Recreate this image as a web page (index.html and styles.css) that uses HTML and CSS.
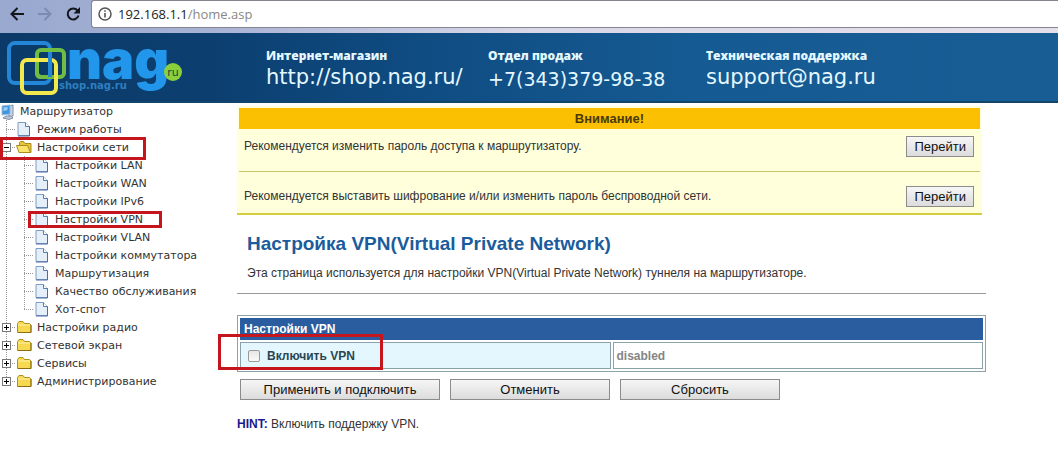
FILE: index.html
```html
<!DOCTYPE html>
<html lang="ru">
<head>
  <meta charset="UTF-8">
  <meta name="viewport" content="width=device-width, initial-scale=1">
  <title>Настройка VPN</title>
  <link rel="stylesheet" href="styles.css">
</head>
<body>
  <!-- Shared icons -->
  <svg class="sprite" aria-hidden="true">
    <symbol id="icon-page" viewBox="0 0 16 16">
      <path d="M2 1.500h7.500l4 4v9H2z" fill="#e4effa" stroke="#7f9cc4"/>
      <path d="M9.500 1.500v4h4" fill="#fff" stroke="#5a7db0"/>
      <path d="M13.500 5.500v9.500H2" fill="none" stroke="#4c6da3"/>
    </symbol>
    <symbol id="icon-folder" viewBox="0 0 16 16">
      <path d="M1.500 13.500v-9l1.500-2h4l1.500 2h5l1.500 1.500v7.500z" fill="#f7d851" stroke="#b08f1c"/>
      <path d="M2 6h12" stroke="#fff3a8"/>
      <path d="M2 13.500h13V6" fill="none" stroke="#8a6d10"/>
    </symbol>
    <symbol id="icon-folder-open" viewBox="0 0 16 16">
      <path d="M3.500 13V3.500l1-1h3l1.500 2h6V13.500z" fill="#e9c33c" stroke="#a98a1d"/>
      <path d="M.5 6.500h11l3 7H3z" fill="#fbe46c" stroke="#a98a1d"/>
    </symbol>
    <symbol id="icon-computer" viewBox="0 0 16 16">
      <path d="M9 2l4-1v11l-4 1z" fill="#c5d3e4" stroke="#7c92b0"/>
      <path d="M2 2l8-1v9l-8 1z" fill="#3f94e0" stroke="#9fb9d8"/>
      <path d="M3.500 3.500l4-.5v3l-4 1z" fill="#9ad0fa"/>
      <path d="M3 14l3-2h5l2 2-4 1.500z" fill="#b9c4d4" stroke="#8392a8"/>
    </symbol>
  </svg>

  <div class="browser">
    <div class="browser-nav">
      <button type="button" aria-label="Назад">
        <svg width="16" height="16" viewBox="0 0 16 16" fill="none" stroke="#15161c" stroke-width="2"><path d="M15 8H3M8.500 2L2.500 8l6 6"/></svg>
      </button>
      <button type="button" aria-label="Вперёд" disabled>
        <svg width="16" height="16" viewBox="0 0 16 16" fill="none" stroke="#7c8cb0" stroke-width="2"><path d="M1 8h12M7.500 2l6 6-6 6"/></svg>
      </button>
      <button type="button" aria-label="Обновить">
        <svg width="16" height="16" viewBox="0 0 16 16"><path d="M12.500 4.500A5.500 5.500 0 1 0 13.500 9.500" fill="none" stroke="#15161c" stroke-width="2"/><path d="M15 1v6.500H8.500z" fill="#15161c"/></svg>
      </button>
    </div>
    <div class="address">
      <svg width="14" height="14" viewBox="0 0 14 14"><circle cx="7" cy="7" r="6" fill="none" stroke="#555" stroke-width="1.500"/><path d="M7 6v4.500M7 3.200v1.600" stroke="#555" stroke-width="1.600"/></svg>
      <span>192.168.1.1<span class="path">/home.asp</span></span>
    </div>
  </div>

  <header class="header">
    <a class="logo" href="#" aria-label="shop.nag.ru">
      <svg width="186" height="70" viewBox="0 0 186 70">
        <g fill="none" stroke-width="4">
          <rect x="9" y="10" width="41" height="40" rx="6" stroke="#2386d6"/>
          <rect x="37" y="17" width="27" height="27" rx="4" stroke="#6fbe43"/>
          <rect x="22" y="27" width="34" height="33" rx="5" stroke="#f3e84c"/>
          <path d="M37 34v6q0 4 4 4h9" stroke="#6fbe43"/>
          <path d="M50 20v24" stroke="#2386d6"/>
        </g>
        <text class="logo-name" x="67" y="46">nag</text>
        <text class="logo-shop" x="59" y="56">shop.nag.ru</text>
        <circle cx="173" cy="39" r="9" fill="#8bd03c"/>
        <text class="logo-ru" x="173" y="43" text-anchor="middle">ru</text>
      </svg>
    </a>
    <div class="contact contact-shop">
      <strong>Интернет-магазин</strong>
      <a href="#">http://shop.nag.ru/</a>
    </div>
    <div class="contact contact-phone">
      <strong>Отдел продаж</strong>
      <a href="#">+7(343)379-98-38</a>
    </div>
    <div class="contact">
      <strong>Техническая поддержка</strong>
      <a href="#">support@nag.ru</a>
    </div>
  </header>

  <div class="layout">
    <nav class="sidebar">
      <div class="row root">
        <svg class="icon"><use href="#icon-computer"/></svg>
        <a href="#">Маршрутизатор</a>
      </div>
      <ul class="tree">
        <li>
          <div class="row"><span class="branch"></span><svg class="icon"><use href="#icon-page"/></svg><a href="#">Режим работы</a></div>
        </li>
        <li>
          <div class="row mark mark-network"><span class="branch"><button type="button" class="toggle open" aria-label="Свернуть"></button></span><svg class="icon"><use href="#icon-folder-open"/></svg><a href="#">Настройки сети</a></div>
          <ul class="tree">
            <li><div class="row"><span class="branch"></span><svg class="icon"><use href="#icon-page"/></svg><a href="#">Настройки LAN</a></div></li>
            <li><div class="row"><span class="branch"></span><svg class="icon"><use href="#icon-page"/></svg><a href="#">Настройки WAN</a></div></li>
            <li><div class="row"><span class="branch"></span><svg class="icon"><use href="#icon-page"/></svg><a href="#">Настройки IPv6</a></div></li>
            <li><div class="row mark mark-vpn"><span class="branch"></span><svg class="icon"><use href="#icon-page"/></svg><a href="#">Настройки VPN</a></div></li>
            <li><div class="row"><span class="branch"></span><svg class="icon"><use href="#icon-page"/></svg><a href="#">Настройки VLAN</a></div></li>
            <li><div class="row"><span class="branch"></span><svg class="icon"><use href="#icon-page"/></svg><a href="#">Настройки коммутатора</a></div></li>
            <li><div class="row"><span class="branch"></span><svg class="icon"><use href="#icon-page"/></svg><a href="#">Маршрутизация</a></div></li>
            <li><div class="row"><span class="branch"></span><svg class="icon"><use href="#icon-page"/></svg><a href="#">Качество обслуживания</a></div></li>
            <li><div class="row"><span class="branch"></span><svg class="icon"><use href="#icon-page"/></svg><a href="#">Хот-спот</a></div></li>
          </ul>
        </li>
        <li>
          <div class="row"><span class="branch"><button type="button" class="toggle" aria-label="Развернуть"></button></span><svg class="icon"><use href="#icon-folder"/></svg><a href="#">Настройки радио</a></div>
        </li>
        <li>
          <div class="row"><span class="branch"><button type="button" class="toggle" aria-label="Развернуть"></button></span><svg class="icon"><use href="#icon-folder"/></svg><a href="#">Сетевой экран</a></div>
        </li>
        <li>
          <div class="row"><span class="branch"><button type="button" class="toggle" aria-label="Развернуть"></button></span><svg class="icon"><use href="#icon-folder"/></svg><a href="#">Сервисы</a></div>
        </li>
        <li>
          <div class="row"><span class="branch"><button type="button" class="toggle" aria-label="Развернуть"></button></span><svg class="icon"><use href="#icon-folder"/></svg><a href="#">Администрирование</a></div>
        </li>
      </ul>
    </nav>

    <main class="content">
      <section class="warning">
        <h2>Внимание!</h2>
        <div class="warning-row">
          <span>Рекомендуется изменить пароль доступа к маршрутизатору.</span>
          <button type="button" class="btn">Перейти</button>
        </div>
        <div class="warning-row">
          <span>Рекомендуется выставить шифрование и/или изменить пароль беспроводной сети.</span>
          <button type="button" class="btn">Перейти</button>
        </div>
      </section>

      <div class="intro">
        <h1>Настройка VPN(Virtual Private Network)</h1>
        <p>Эта страница используется для настройки VPN(Virtual Private Network) туннеля на маршрутизаторе.</p>
      </div>

      <form>
        <table class="settings">
          <thead>
            <tr><th colspan="2">Настройки VPN</th></tr>
          </thead>
          <tbody>
            <tr>
              <td class="name mark mark-enable">
                <label><input type="checkbox" id="vpnEnabled">Включить VPN</label>
              </td>
              <td class="value">disabled</td>
            </tr>
          </tbody>
        </table>
        <div class="actions">
          <button type="submit" class="btn apply">Применить и подключить</button>
          <button type="button" class="btn">Отменить</button>
          <button type="reset" class="btn">Сбросить</button>
        </div>
      </form>
      <p class="hint"><b>HINT:</b> Включить поддержку VPN.</p>
    </main>
  </div>
</body>
</html>
```
FILE: styles.css
```css
*, *::after {
  box-sizing: border-box;
}
body {
  margin: 0;
  background: #fff;
  color: #333;
  font-family: "Liberation Sans", Arial, sans-serif;
  font-size: 12px;
}
a {
  color: inherit;
  text-decoration: none;
}
.sprite {
  display: none;
}

/* Browser bar */
.browser {
  display: flex;
  height: 33px;
  padding-bottom: 5px;
  background: linear-gradient(to right, #98a8cf, #a9b3d4 20%, #d9d8e8 50%, #e6e0ea);
}
.browser-nav {
  display: flex;
  align-items: center;
  gap: 12px;
  width: 91px;
  padding-left: 9px;
}
.browser-nav button {
  display: flex;
  padding: 0;
  border: none;
  background: none;
}
.address {
  display: flex;
  flex: 1;
  align-items: center;
  gap: 6px;
  padding-left: 6px;
  border: 1px solid #85858f;
  border-right: none;
  border-radius: 3px 0 0 3px;
  background: #fff;
  color: #222;
  font-family: "Open Sans", sans-serif;
  font-size: 13px;
}
.address .path {
  color: #888;
}

/* Header */
.header {
  display: flex;
  height: 70px;
  background: linear-gradient(to right, #0b3a68, #0c3f70 20%, #0f4c82 40%, #155a92 65%, #185e95);
  border-bottom: 2px solid #124569;
  color: #e4f8ff;
}
.logo {
  width: 266px;
}
.logo svg {
  overflow: visible;
}
.logo-name {
  fill: #2196ea;
  font: 900 54px Inter, "Liberation Sans", Arial, sans-serif;
}
.logo-shop {
  fill: #2f7fc0;
  font: bold 10px "DejaVu Sans", Verdana, sans-serif;
}
.logo-ru {
  fill: #174a3a;
  font: 11px "DejaVu Sans", Verdana, sans-serif;
}
.contact {
  display: flex;
  flex-direction: column;
  padding-top: 15px;
  font-family: "DejaVu Sans", Verdana, sans-serif;
}
.contact strong {
  font-family: "Open Sans", sans-serif;
  font-size: 12px;
  font-weight: 800;
  line-height: 16px;
}
.contact a {
  font-size: 21px;
  line-height: 26px;
}
.contact-shop {
  width: 222px;
}
.contact-phone {
  width: 218px;
}
.contact-phone a {
  font-size: 19px;
  line-height: 30px;
}

.layout {
  display: flex;
}

/* Menu tree */
.sidebar {
  width: 237px;
  font-family: "DejaVu Sans", Verdana, sans-serif;
  font-size: 11px;
}
.tree {
  margin: 0;
  padding: 0;
  list-style: none;
  background: repeating-linear-gradient(#999 0 1px, transparent 1px 2px) 6px 0 / 1px calc(100% - 9px) no-repeat;
}
.tree .tree {
  margin-left: 18px;
}
.row {
  display: flex;
  align-items: center;
  height: 18px;
}
.row a {
  margin-left: 5px;
}
.root {
  height: 17px;
}
.root a {
  margin-left: 4px;
}
.icon {
  width: 16px;
  height: 16px;
}
.branch {
  display: flex;
  width: 16px;
  padding-left: 2px;
  background: repeating-linear-gradient(to right, #999 0 1px, transparent 1px 2px) 6px 50% / 10px 1px no-repeat;
}
.branch:empty {
  height: 9px;
}
.toggle {
  width: 9px;
  height: 9px;
  padding: 0;
  border: 1px solid #777;
  background:
    linear-gradient(#000, #000) center / 5px 1px no-repeat,
    linear-gradient(#000, #000) center / 1px 5px no-repeat,
    #fff;
}
.toggle.open {
  background:
    linear-gradient(#000, #000) center / 5px 1px no-repeat,
    #fff;
}

/* Red frames over the items to click */
.mark {
  position: relative;
}
.mark::after {
  content: "";
  position: absolute;
  border: 3px solid #c4161c;
  pointer-events: none;
}
.mark-network::after {
  left: 0;
  top: -1px;
  width: 146px;
  height: 23px;
}
.mark-vpn::after {
  left: 10px;
  top: 1px;
  width: 134px;
  height: 17px;
}
.mark-enable::after {
  left: -23px;
  top: -9px;
  width: 165px;
  height: 36px;
}

/* Content */
.content {
  flex: 1;
  padding: 3px 72px 0 0;
}
.warning {
  margin-right: 4px;
  padding: 2px 2px 0;
  background: #ffffdc;
  border-bottom: 2px solid #d6cc3c;
}
.warning h2 {
  margin: 0;
  background: #fcc003;
  color: #4a3a08;
  font-size: 13px;
  line-height: 21px;
  text-align: center;
}
.warning-row {
  display: flex;
  justify-content: space-between;
  align-items: flex-start;
  height: 42px;
  padding: 7px 6px 0 5px;
}
.warning-row span {
  line-height: 20px;
}
.warning-row + .warning-row {
  padding-top: 14px;
  border-top: 1px solid #c9c46c;
}
.btn {
  height: 21px;
  padding: 0 7px;
  border: 1px solid #8c8c8c;
  background: linear-gradient(#f6f6f6, #dcdcdc);
  color: #111;
  font-family: inherit;
  font-size: 13px;
  line-height: 19px;
}
.intro {
  padding: 17px 10px 12px;
  border-bottom: 1px solid #999;
}
.intro h1 {
  margin: 0 0 9px;
  color: #1a5c9c;
  font-size: 19px;
  line-height: 24px;
}
.intro p {
  margin: 0;
  line-height: 16px;
}
.settings {
  width: 100%;
  margin-top: 21px;
  border: 1px solid #8ba3a8;
  border-spacing: 2px;
}
.settings th {
  height: 22px;
  padding: 0 4px;
  background: #2a5d9f;
  color: #fff;
  text-align: left;
}
.settings td {
  height: 27px;
  padding: 0 3px;
  border: 1px solid #8ba3a8;
  font-weight: bold;
}
.settings .name {
  width: 50%;
  background: #e4f7ff;
  color: #2c4650;
}
.settings label {
  display: flex;
  align-items: center;
  gap: 7px;
  padding-left: 4px;
}
.settings input {
  appearance: none;
  width: 12px;
  height: 12px;
  margin: 0;
  border: 1px solid #999;
  border-radius: 2px;
  background: linear-gradient(#e6e6e6, #fafafa);
}
.settings .value {
  color: #858585;
}
.actions {
  display: flex;
  gap: 10px;
  padding: 7px 3px 0;
}
.actions .btn {
  width: 160px;
}
.actions .apply {
  width: 200px;
}
.hint {
  margin: 16px 0;
  line-height: 16px;
}
.hint b {
  color: #1a1a8c;
}
```
